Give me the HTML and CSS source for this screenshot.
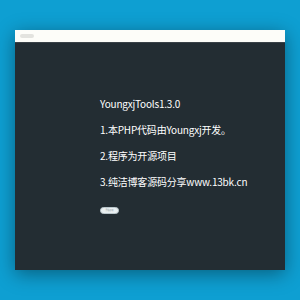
FILE: index.html
```html
<!DOCTYPE html>
<html lang="zh-CN">
<head>
<meta charset="utf-8">
<title>YoungxjTools</title>
<link rel="stylesheet" href="styles.css">
</head>
<body>
<div class="window">
  <div class="titlebar"><span class="pill"></span></div>
  <div class="content">
    <p class="line">YoungxjTools1.3.0</p>
    <p class="line">1.本PHP代码由Youngxj开发。</p>
    <p class="line">2.程序为开源项目</p>
    <p class="line">3.纯洁博客源码分享www.13bk.cn</p>
    <button class="btn">开始使用</button>
  </div>
</div>
</body>
</html>
```
FILE: styles.css
```css
html, body {
  margin: 0;
  height: 100%;
}
body {
  background: #0e9fd2;
  padding: 30px 15px;
  box-sizing: border-box;
  font-family: "Noto Sans CJK SC", "Noto Sans", sans-serif;
}
.window {
  height: 240px;
  background: #232d33;
  box-shadow: 0 4px 18px rgba(0, 0, 0, 0.4);
}
.titlebar {
  height: 12px;
  background: #fdfdf9;
  border-bottom: 1px solid #3a4248;
  display: flex;
  align-items: center;
  padding-left: 5px;
}
.pill {
  width: 14px;
  height: 4px;
  border-radius: 2px;
  background: #e3e3df;
}
.content {
  padding: 48px 0 0 85px;
}
.line {
  margin: 0;
  color: #ffffff;
  font-size: 10px;
  line-height: 26px;
  letter-spacing: -0.2px;
  white-space: nowrap;
}
.btn {
  margin-top: 12px;
  width: 19px;
  height: 7px;
  padding: 0;
  border: 1px solid #b9c6cb;
  border-radius: 4px;
  background: #e9eff1;
  color: #8a969a;
  font-size: 2px;
  line-height: 5px;
  font-family: inherit;
  display: block;
}
```
